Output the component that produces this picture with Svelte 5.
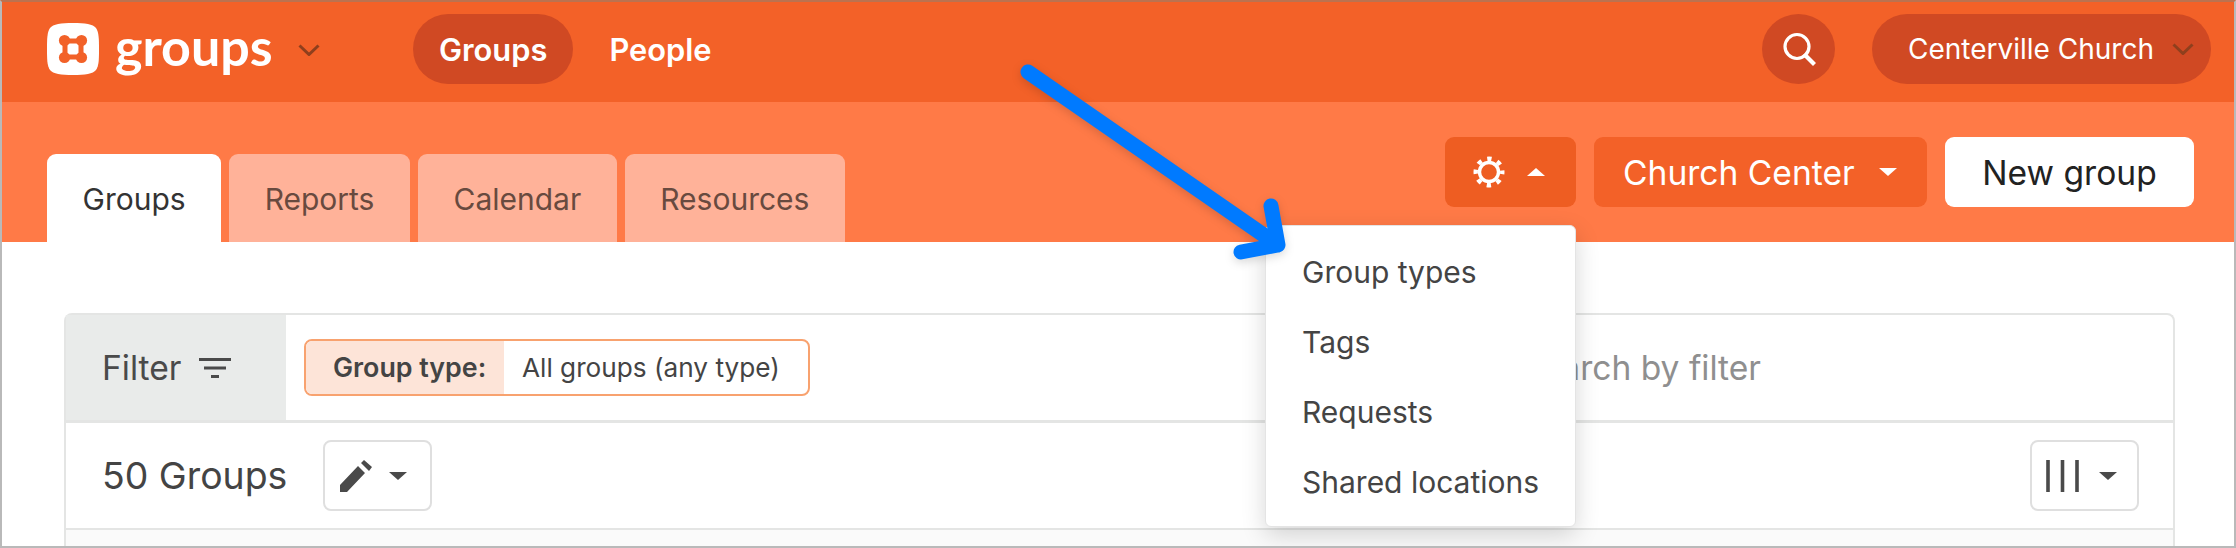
<script>
  const tabs = ['Groups', 'Reports', 'Calendar', 'Resources'];
  const menu = ['Group types', 'Tags', 'Requests', 'Shared locations'];
</script>

<div class="frame">
  <header class="topbar">
    <div class="brand">
      <svg class="logo" viewBox="0 0 52 52" aria-hidden="true">
        <path fill="#fff" d="M26 0C38 0 46 1 49 5c3 4 3 12 3 21s0 17-3 21c-3 4-11 5-23 5s-20-1-23-5c-3-4-3-12-3-21S0 9 3 5C6 1 14 0 26 0Z"/>
        <rect x="18" y="18" width="16" height="16" rx="3" fill="none" stroke="#f26128" stroke-width="5"/>
        <circle cx="17.5" cy="17.5" r="5.6" fill="#f26128"/>
        <circle cx="34.5" cy="17.5" r="5.6" fill="#f26128"/>
        <circle cx="17.5" cy="34.5" r="5.6" fill="#f26128"/>
        <circle cx="34.5" cy="34.5" r="5.6" fill="#f26128"/>
      </svg>
      <span class="wordmark">groups</span>
      <svg class="chev brand-chev" viewBox="0 0 22 12" aria-hidden="true"><path d="M1.5 1.5 11 10.5l9.5-9" /></svg>
    </div>
    <nav class="nav">
      <span class="nav-item active">Groups</span>
      <span class="nav-item">People</span>
    </nav>
    <div class="top-right">
      <span class="search-btn">
        <svg viewBox="0 0 36 36" width="36" height="36" aria-hidden="true">
          <circle cx="16" cy="15.5" r="12" fill="none" stroke="#fff" stroke-width="3.2"/>
          <path d="M24.5 24.5 32 32" stroke="#fff" stroke-width="4.2" stroke-linecap="square"/>
        </svg>
      </span>
      <span class="org-pill">
        <span>Centerville Church</span>
        <svg class="chev" viewBox="0 0 22 12" aria-hidden="true"><path d="M1.5 1.5 11 10.5l9.5-9" /></svg>
      </span>
    </div>
  </header>

  <div class="subbar">
    <div class="tabs">
      {#each tabs as tab, i}
        <span class="tab" class:current={i === 0}>{tab}</span>
      {/each}
    </div>
    <div class="actions">
      <span class="btn gear-btn">
        <svg viewBox="0 0 32 32" width="32" height="32" aria-hidden="true">
          <circle cx="16" cy="16" r="9.500" fill="none" stroke="#fff" stroke-width="3.400"/>
          <circle cx="16" cy="16" r="13.300" fill="none" stroke="#fff" stroke-width="4.400" stroke-dasharray="4.400 6.045" stroke-dashoffset="2.200"/>
        </svg>
        <span class="caret up"></span>
      </span>
      <span class="btn church-btn">Church Center<span class="caret light"></span></span>
      <span class="btn new-btn">New group</span>
    </div>
  </div>

  <main class="content">
    <section class="panel">
      <div class="filter-row">
        <div class="filter-cell">
          <span>Filter</span>
          <svg viewBox="0 0 32 20" width="32" height="20" aria-hidden="true">
            <path d="M0 1.5h32M5 10h22M12 18.500h8" stroke="#4a4a4a" stroke-width="3"/>
          </svg>
        </div>
        <div class="chip">
          <span class="chip-label">Group type:</span>
          <span class="chip-value">All groups (any type)</span>
        </div>
        <span class="placeholder">Search by filter</span>
      </div>
      <div class="count-row">
        <span class="count">50 Groups</span>
        <span class="tool edit-tool">
          <svg viewBox="0 0 32 32" width="32" height="32" aria-hidden="true">
            <path fill="#4a4a4a" d="M0 32v-7L18 6l7 7L7 32ZM21 3l3-3 8 7-3 4Z"/>
          </svg>
          <span class="caret dark"></span>
        </span>
        <span class="tool col-tool">
          <svg viewBox="0 0 33 32" width="33" height="32" aria-hidden="true">
            <path d="M2 0v32M16.500 0v32M31 0v32" stroke="#4a4a4a" stroke-width="3.600"/>
          </svg>
          <span class="caret dark"></span>
        </span>
      </div>
      <div class="table-head"></div>
    </section>
  </main>

  <div class="menu">
    {#each menu as item}
      <div class="menu-item">{item}</div>
    {/each}
  </div>

  <svg class="arrow" viewBox="0 0 2236 548" aria-hidden="true">
    <path d="M1028 72 1278 245M1271 206l7 39-37 7" fill="none" stroke="#007aff" stroke-width="15" stroke-linecap="round" stroke-linejoin="round"/>
  </svg>
</div>

<style>
  :global(body) {
    margin: 0;
    background: #fff;
  }
  .frame {
    position: relative;
    box-sizing: border-box;
    width: 2236px;
    height: 548px;
    overflow: hidden;
    border: 2px solid #b9b9b9;
    border-top-color: #bb7250;
    font-family: Inter, "Noto Sans", sans-serif;
    color: #444;
    background: #fff;
  }
  .topbar {
    display: flex;
    align-items: center;
    box-sizing: border-box;
    height: 100px;
    padding: 0 23px 6px 45px;
    background: #f36128;
    color: #fff;
  }
  .brand {
    display: flex;
    align-items: center;
    width: 366px;
  }
  .logo {
    width: 52px;
    height: 52px;
    margin-right: 16px;
  }
  .wordmark {
    font-family: Lato, sans-serif;
    font-size: 52px;
    font-weight: 700;
    line-height: 1;
    margin-top: -6px;
  }
  .chev {
    width: 22px;
    height: 12px;
    fill: none;
    stroke: #8f3f1d;
    stroke-width: 3;
  }
  .brand-chev {
    margin-left: 25px;
    margin-top: 1px;
  }
  .nav {
    display: flex;
    gap: 10px;
  }
  .nav-item {
    display: flex;
    align-items: center;
    height: 70px;
    padding: 0 26px;
    border-radius: 35px;
    font-size: 30.8px;
    font-weight: 600;
  }
  .nav-item.active {
    background: #d04923;
  }
  .top-right {
    display: flex;
    align-items: center;
    gap: 37px;
    margin-left: auto;
  }
  .search-btn {
    display: flex;
    align-items: center;
    justify-content: center;
    width: 73px;
    height: 70px;
    border-radius: 50%;
    background: #d04923;
  }
  .org-pill {
    display: flex;
    align-items: center;
    justify-content: space-between;
    box-sizing: border-box;
    width: 339px;
    height: 70px;
    padding: 0 17px 0 36px;
    border-radius: 35px;
    background: #d04923;
    font-size: 28px;
  }
  .subbar {
    display: flex;
    justify-content: space-between;
    height: 140px;
    padding: 0 40px 0 45px;
    background: #ff7a47;
  }
  .tabs {
    display: flex;
    align-items: flex-end;
    gap: 8px;
  }
  .tab {
    display: flex;
    align-items: center;
    justify-content: center;
    box-sizing: border-box;
    height: 88px;
    padding: 2px 35.5px 0;
    border-radius: 9px 9px 0 0;
    background: #ffb299;
    color: #684a3f;
    font-size: 30px;
  }
  .tab.current {
    background: #fff;
    color: #333;
  }
  .actions {
    display: flex;
    gap: 18px;
    margin-top: 35px;
  }
  .btn {
    display: flex;
    align-items: center;
    box-sizing: border-box;
    height: 70px;
    border-radius: 9px;
    font-size: 33.6px;
    color: #fff;
  }
  .gear-btn {
    width: 131px;
    padding-left: 28px;
    background: #ee5d22;
  }
  .church-btn {
    width: 333px;
    padding-left: 29px;
    background: #f36128;
  }
  .new-btn {
    justify-content: center;
    width: 249px;
    background: #fff;
    color: #222;
  }
  .caret {
    width: 0;
    height: 0;
    border-left: 9px solid transparent;
    border-right: 9px solid transparent;
    border-top: 8px solid #fff;
  }
  .caret.up {
    margin-left: 22px;
    border-top: 0;
    border-bottom: 8px solid #fff;
  }
  .caret.light {
    margin-left: 24px;
  }
  .caret.dark {
    border-top-color: #4a4a4a;
  }
  .content {
    padding: 71px 59px 0 62px;
  }
  .panel {
    border: 2px solid #e4e5e4;
    border-bottom: 0;
    border-radius: 8px 8px 0 0;
  }
  .filter-row {
    display: flex;
    align-items: center;
    height: 105px;
    border-bottom: 3px solid #e4e5e4;
  }
  .filter-cell {
    display: flex;
    align-items: center;
    gap: 18px;
    box-sizing: border-box;
    width: 220px;
    height: 100%;
    padding-left: 36px;
    background: #e9ebea;
    font-size: 33.6px;
    color: #4a4a4a;
  }
  .chip {
    display: flex;
    box-sizing: border-box;
    height: 57px;
    margin-left: 18px;
    border: 2px solid #f8a26f;
    border-radius: 8px;
    overflow: hidden;
    font-size: 26.2px;
    line-height: 53px;
  }
  .chip-label {
    width: 198px;
    box-sizing: border-box;
    padding-left: 27px;
    background: #fde4d8;
    font-size: 26.8px;
    font-weight: 600;
    white-space: nowrap;
  }
  .chip-value {
    width: 304px;
    box-sizing: border-box;
    padding-left: 18px;
    white-space: nowrap;
  }
  .placeholder {
    margin-left: auto;
    padding-right: 412px;
    font-size: 33.6px;
    color: #8f8f8f;
  }
  .count-row {
    display: flex;
    align-items: center;
    height: 105px;
    padding: 0 34px 0 36px;
    border-bottom: 2px solid #e4e5e4;
  }
  .count {
    font-size: 37.4px;
    color: #444;
  }
  .tool {
    display: flex;
    align-items: center;
    gap: 17px;
    box-sizing: border-box;
    height: 71px;
    border: 2px solid #dfdfdf;
    border-radius: 8px;
  }
  .edit-tool {
    width: 109px;
    margin-left: 36px;
    padding-left: 15px;
  }
  .col-tool {
    width: 109px;
    margin-left: auto;
    padding-left: 14px;
    gap: 20px;
  }
  .table-head {
    height: 40px;
    background: #fafafa;
  }
  .menu {
    position: absolute;
    left: 1263px;
    top: 223px;
    box-sizing: border-box;
    width: 311px;
    height: 302px;
    padding: 11px 0 15px;
    background: #fff;
    border: 1px solid #e4e4e4;
    border-radius: 6px;
    box-shadow: 0 8px 24px rgba(0, 0, 0, 0.16);
  }
  .menu-item {
    display: flex;
    align-items: center;
    height: 70px;
    padding-left: 36px;
    font-size: 30px;
    color: #444;
  }
  .arrow {
    position: absolute;
    left: -2px;
    top: -2px;
    width: 2236px;
    height: 548px;
    pointer-events: none;
    filter: drop-shadow(0 3px 5px rgba(0, 0, 0, 0.15));
  }
</style>
